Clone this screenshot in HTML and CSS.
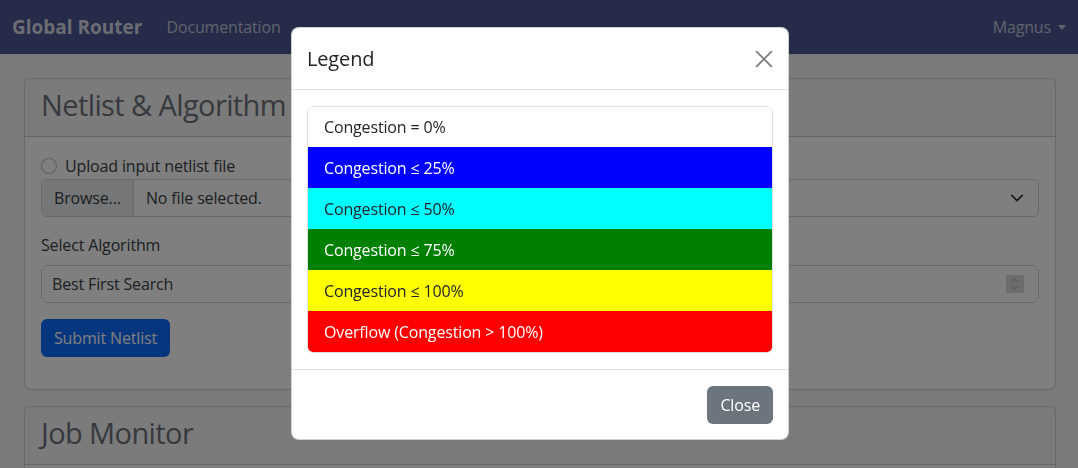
FILE: index.html
```html
<!DOCTYPE html>
<html lang="en">
<head>
<meta charset="utf-8">
<title>Global Router</title>
<link rel="stylesheet" href="styles.css">
</head>
<body>
<nav class="navbar">
  <div class="nav-left">
    <span class="brand">Global Router</span>
    <span class="nav-link">Documentation</span>
  </div>
  <span class="nav-link user">Magnus <span class="caret"></span></span>
</nav>

<main class="page">
  <section class="card">
    <div class="card-header"><h2>Netlist &amp; Algorithm Selection</h2></div>
    <div class="card-body">
      <div class="netlist-row">
        <div class="col">
          <label class="check"><span class="radio"></span>Upload input netlist file</label>
          <div class="file-input"><span class="file-btn">Browse…</span><span class="file-name">No file selected.</span></div>
        </div>
        <div class="col">
          <label class="check"><span class="radio"></span>Use sample netlist</label>
          <div class="select"><span>adaptec1</span>
            <svg class="chev" width="14" height="14" viewBox="0 0 16 16"><path d="M2 5l6 6 6-6" fill="none" stroke="#343a40" stroke-width="2" stroke-linecap="round" stroke-linejoin="round"/></svg>
          </div>
        </div>
      </div>
      <label class="label">Select Algorithm</label>
      <div class="select algo"><span>Best First Search</span>
        <span class="spin">
          <svg width="10" height="16" viewBox="0 0 10 16"><path d="M2 6l3-3 3 3M2 10l3 3 3-3" fill="none" stroke="#bdbdbd" stroke-width="1.2" stroke-linecap="round" stroke-linejoin="round"/></svg>
        </span>
      </div>
      <button class="btn btn-primary">Submit Netlist</button>
    </div>
  </section>

  <section class="card">
    <div class="card-header"><h2>Job Monitor</h2></div>
    <div class="card-body tall"></div>
  </section>
</main>

<div class="backdrop"></div>

<div class="modal">
  <div class="modal-dialog">
    <div class="modal-header">
      <h5 class="modal-title">Legend</h5>
      <span class="btn-close">
        <svg width="18" height="18" viewBox="0 0 16 16"><path d="M1 1l14 14M15 1L1 15" stroke="#000" stroke-width="1.6"/></svg>
      </span>
    </div>
    <div class="modal-body">
      <ul class="list-group">
        <li class="item c0">Congestion = 0%</li>
        <li class="item c25">Congestion ≤ 25%</li>
        <li class="item c50">Congestion ≤ 50%</li>
        <li class="item c75">Congestion ≤ 75%</li>
        <li class="item c100">Congestion ≤ 100%</li>
        <li class="item cov">Overflow (Congestion &gt; 100%)</li>
      </ul>
    </div>
    <div class="modal-footer">
      <button class="btn btn-secondary">Close</button>
    </div>
  </div>
</div>
</body>
</html>
```

FILE: styles.css
```css
* { box-sizing: border-box; }
html, body { margin: 0; height: 100%; overflow: hidden; }
body {
  font-family: "Open Sans", "Noto Sans", sans-serif;
  font-size: 16px;
  line-height: 1.5;
  letter-spacing: -0.15px;
  color: #212529;
  background: #f4f4f4;
}

.navbar {
  height: 54px;
  background: #4a5690;
  display: flex;
  align-items: center;
  justify-content: space-between;
  padding: 0 12px;
}
.nav-left { display: flex; align-items: center; }
.brand {
  font-size: 19px;
  font-weight: 700;
  letter-spacing: 0;
  color: #d8dbe6;
  margin-right: 16px;
  line-height: 30px;
}
.nav-link {
  color: #c3c7dc;
  padding: 8px;
  line-height: 24px;
}
.user { padding-right: 0; display: flex; align-items: center; }
.caret {
  display: inline-block;
  margin-left: 7px;
  border-top: 5px solid #c3c7dc;
  border-left: 4px solid transparent;
  border-right: 4px solid transparent;
}

.page { padding: 24px 22px 0 24px; display: flex; flex-direction: column; gap: 16px; }
.card {
  background: #fff;
  border: 1px solid rgba(0,0,0,.175);
  border-radius: 6px;
}
.card-header {
  background: rgba(0,0,0,.03);
  border-bottom: 1px solid rgba(0,0,0,.175);
  padding: 7px 16px 13px;
}
.card-header h2 {
  margin: 0;
  font-size: 29px;
  font-weight: 400;
  line-height: 37px;
  letter-spacing: -0.6px;
  color: #6c727c;
}
.card-body { padding: 16px 16px 32px; }
.card-body.tall { height: 60px; }

.netlist-row { display: grid; grid-template-columns: 1fr 1fr; gap: 16px; }
.check { display: flex; align-items: center; gap: 8px; color: #3a3f44; margin-top: 1px; margin-bottom: 1px; }
.radio {
  width: 16px; height: 16px; border-radius: 50%;
  border: 1px solid rgba(0,0,0,.25); background: #fff;
}
.file-input {
  display: flex;
  height: 38px;
  border: 1px solid #ced4da;
  border-radius: 6px;
  overflow: hidden;
  color: #3a3f44;
}
.file-btn {
  background: #e9ecef;
  border-right: 1px solid #ced4da;
  padding: 6px 12px;
}
.file-name { padding: 6px 12px; }
.select {
  height: 38px;
  border: 1px solid #ced4da;
  border-radius: 6px;
  padding: 6px 12px 6px 10px;
  display: flex;
  align-items: center;
  justify-content: space-between;
  color: #3a3f44;
}
.chev { margin-right: 2px; }
.label { display: block; margin-top: 16px; margin-bottom: 8px; color: #3a3f44; }
.algo { margin-bottom: 16px; }
.spin {
  width: 18px; height: 18px;
  background: #d9d9d9;
  display: flex; align-items: center; justify-content: center;
  margin-right: 2px;
}

.btn {
  font: inherit;
  letter-spacing: inherit;
  line-height: 24px;
  padding: 6px 12px;
  border-radius: 6px;
  border: 1px solid transparent;
}
.btn-primary { background: #0d6efd; color: #fff; }
.btn-secondary { background: #6c757d; color: #fff; }

.backdrop {
  position: fixed;
  inset: 0;
  background: rgba(0,0,0,.5);
}

.modal {
  position: fixed;
  inset: 0;
  display: flex;
  justify-content: center;
  padding-left: 2px;
}
.modal-dialog {
  width: 498px;
  margin-top: 27px;
  align-self: flex-start;
  background: #fff;
  border: 1px solid rgba(0,0,0,.175);
  border-radius: 8px;
}
.modal-header {
  display: flex;
  justify-content: space-between;
  align-items: center;
  padding: 16px 15px 15px;
  border-bottom: 1px solid #dee2e6;
}
.modal-title { margin: 0; font-size: 20px; font-weight: 500; line-height: 30px; }
.btn-close { opacity: .5; display: flex; width: 18px; height: 18px; }
.modal-body { padding: 16px 15px; }
.list-group {
  list-style: none;
  margin: 0;
  padding: 0;
  border-radius: 6px;
  overflow: hidden;
  border: 1px solid rgba(0,0,0,.125);
}
.item {
  padding: 8px 16px;
  line-height: 24px;
  border-top: 1px solid rgba(0,0,0,.125);
  height: 41px;
}
.item:first-child { border-top: 0; height: 40px; }
.c0 { background: #fff; color: #212529; }
.c25 { background: #0000ff; color: #fff; border-top-color: #0000ff; }
.c50 { background: #00ffff; color: #212529; border-top-color: #00ffff; }
.c75 { background: #008000; color: #fff; border-top-color: #008000; }
.c100 { background: #ffff00; color: #212529; border-top-color: #ffff00; }
.cov { background: #ff0000; color: #fff; border-top-color: #ff0000; }
.modal-footer {
  border-top: 1px solid #dee2e6;
  padding: 16px 15px 15px;
  display: flex;
  justify-content: flex-end;
}
```
